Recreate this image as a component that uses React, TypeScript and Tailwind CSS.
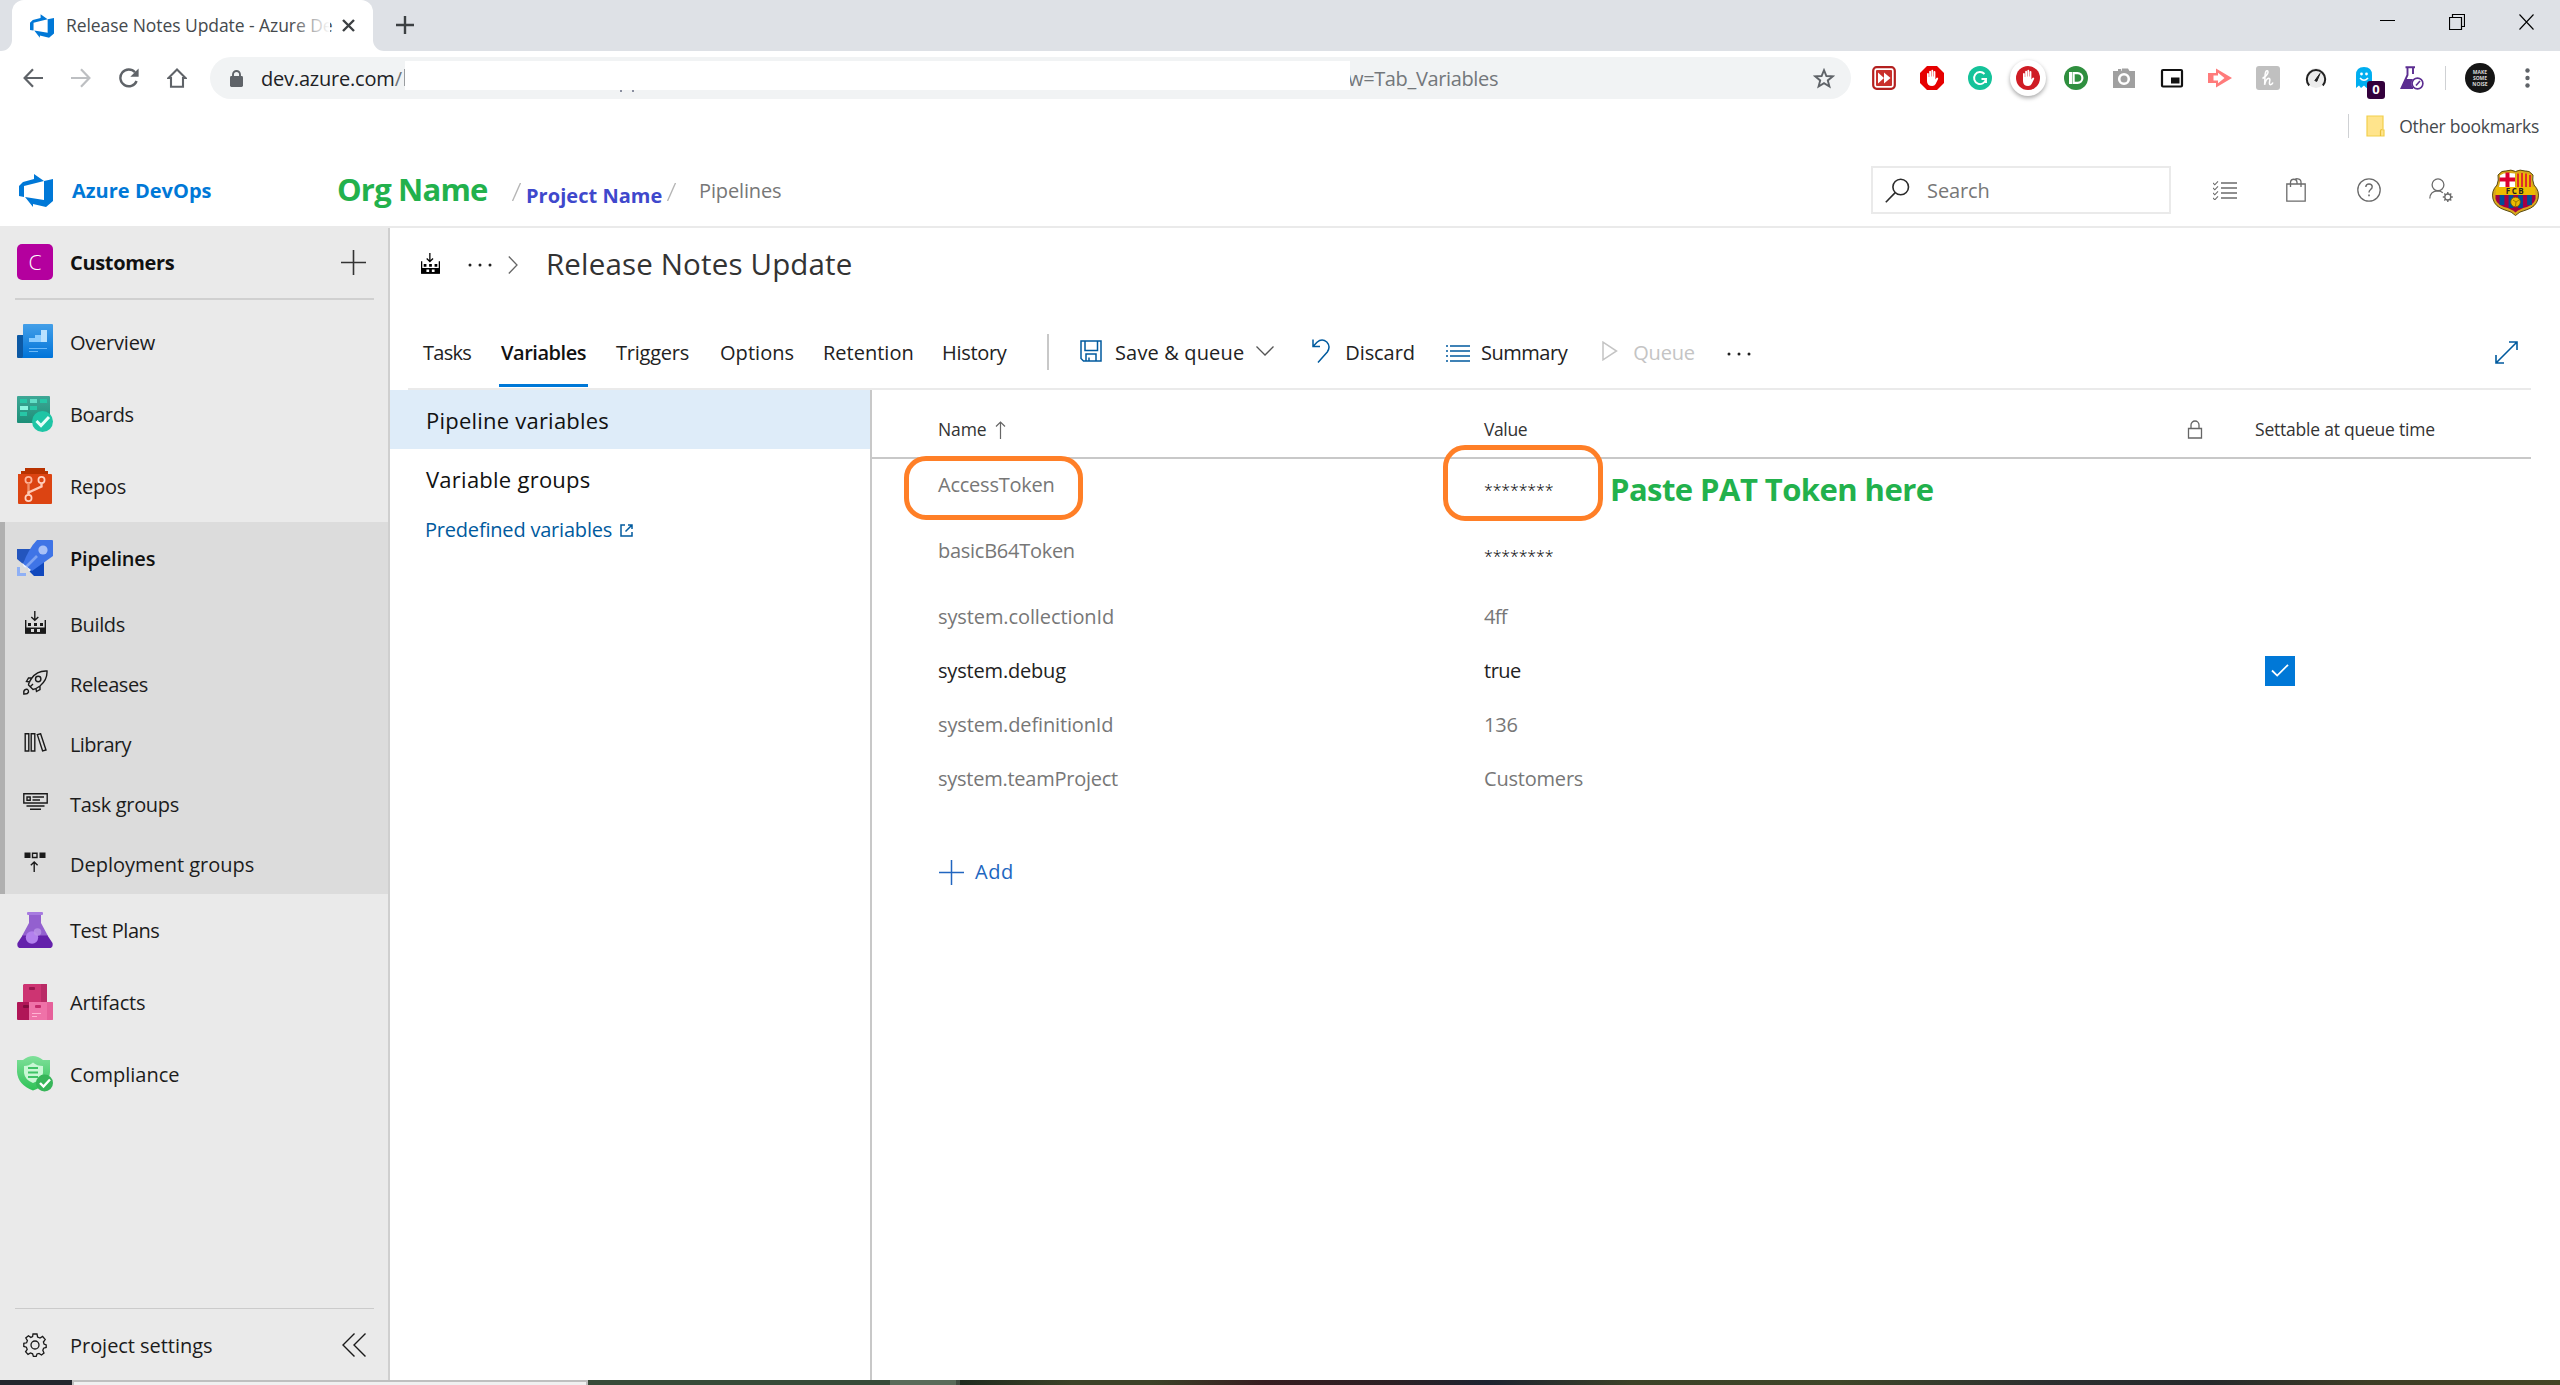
import React from "react";

type IconProps = { w: number; h: number; vb?: string; className?: string; children: React.ReactNode };

function Svg({ w, h, vb, className = "", children }: IconProps) {
  return (
    <svg width={w} height={h} viewBox={vb ?? `0 0 ${w} ${h}`} className={`shrink-0 ${className}`} fill="none">
      {children}
    </svg>
  );
}

function AzureLogo({ w, h }: { w: number; h: number }) {
  return (
    <Svg w={w} h={h} vb="0 0 34 33">
      <path
        fill="#0078d7"
        d="M0 12 L4 8 L15 5 V0 L25 7 L5 12 V23 L0 22 Z M25 7 L34 5 V27 L27 33 L14 30 V33 L6 23 L25 26 Z"
      />
    </Svg>
  );
}

/* ---------- Browser chrome ---------- */

function TabStrip() {
  return (
    <div className="flex h-[51px] bg-[#dee1e6]">
      <div className="flex w-3 items-end bg-white">
        <div className="h-full w-full rounded-br-[11px] bg-[#dee1e6]" />
      </div>
      <div className="h-full w-[361px] bg-[#dee1e6]">
        <div className="flex h-full items-center rounded-t-[12px] bg-white pl-[18px]">
          <AzureLogo w={24} h={24} />
          <div className="relative ml-[12px] w-[264px] whitespace-nowrap text-[17.5px] tracking-[-0.07px] text-[#45494d]">
            Release Notes Update - Azure De
            <div className="absolute inset-y-0 right-0 w-9 bg-gradient-to-r from-white/10 to-white" />
          </div>
          <Svg w={13} h={13} className="ml-[12px]">
            <path d="M1 1 L12 12 M12 1 L1 12" stroke="#3c4043" strokeWidth="2.4" />
          </Svg>
        </div>
      </div>
      <div className="flex w-3 items-end bg-white">
        <div className="h-full w-full rounded-bl-[11px] bg-[#dee1e6]" />
      </div>
      <Svg w={18} h={18} className="ml-[11px] mt-4">
        <path d="M9 0 V18 M0 9 H18" stroke="#3c4043" strokeWidth="2.4" />
      </Svg>
      <div className="ml-auto flex gap-[54px] pr-[26px] pt-[14px]">
        <Svg w={15} h={15}>
          <path d="M0 6.5 H15" stroke="#000" />
        </Svg>
        <Svg w={16} h={16}>
          <path d="M0.5 3.5 H12.5 V15.5 H0.5 Z M3.5 3 V0.5 H15.5 V12.5 H13" stroke="#000" strokeWidth="1.2" />
        </Svg>
        <Svg w={15} h={16}>
          <path d="M0.5 0.5 L14.5 15.5 M14.5 0.5 L0.5 15.5" stroke="#000" strokeWidth="1.1" />
        </Svg>
      </div>
    </div>
  );
}

const handPath =
  "M7 13.5 V8 a0.9 0.9 0 0 1 1.8 0 V11 H9.2 V5.6 a0.9 0.9 0 0 1 1.8 0 V10.5 H11.4 V4.7 a0.9 0.9 0 0 1 1.8 0 V10.5 H13.6 V6 a0.9 0.9 0 0 1 1.8 0 V13.5 L16.4 12 a1 1 0 0 1 1.7 1 L15.6 18 Q14.6 20 12.2 20 Q7 20 7 15 Z";

function Extensions() {
  return (
    <div className="ml-[21px] flex items-center gap-6">
      <Svg w={24} h={24}>
        <rect x="1.2" y="1.2" width="21.6" height="21.6" rx="3.5" fill="#fff" stroke="#b3201f" strokeWidth="2.2" />
        <rect x="4" y="4" width="16" height="16" rx="1" fill="#c9302c" />
        <path d="M6 6.5 L12 12 L6 17.5 Z M12 6.5 L18.5 12 L12 17.5 Z" fill="#fff" />
      </Svg>
      <Svg w={24} h={24}>
        <path d="M7 0 H17 L24 7 V17 L17 24 H7 L0 17 V7 Z" fill="#e60000" />
        <path d={handPath} fill="#fff" />
      </Svg>
      <Svg w={24} h={24}>
        <circle cx="12" cy="12" r="12" fill="#15c39a" />
        <path d="M16.5 8 A6 6 0 1 0 18 13 H13.5 M18 13 V17" stroke="#fff" strokeWidth="1.9" />
      </Svg>
      <div className="-mx-[6px] flex size-9 items-center justify-center rounded-full bg-white shadow-[0_2px_4px_rgba(0,0,0,0.35)]">
        <Svg w={24} h={24}>
          <circle cx="12" cy="12" r="12" fill="#cf1c24" />
          <path d={handPath} fill="#fff" />
        </Svg>
      </div>
      <Svg w={24} h={24}>
        <circle cx="12" cy="12" r="12" fill="#2f8f3f" />
        <path d="M5 6 H8 V18 H5 Z" fill="#fff" />
        <path d="M9.6 7.1 H13.5 a4.9 4.9 0 0 1 0 9.8 H9.6 Z" stroke="#fff" strokeWidth="2.2" />
      </Svg>
      <Svg w={24} h={24}>
        <path d="M1 5 H6 V3 H9 V5 H9.5 L10 2.5 H16 L17.5 5 H23 V22 H1 Z" fill="#a0a0a0" />
        <circle cx="12" cy="13" r="4.8" stroke="#fff" strokeWidth="2.6" />
      </Svg>
      <Svg w={24} h={24}>
        <rect x="2" y="4" width="20" height="16.5" rx="1" fill="#fff" stroke="#111" strokeWidth="2.2" />
        <rect x="11" y="11.5" width="8.5" height="6" fill="#111" />
      </Svg>
      <Svg w={24} h={24}>
        <path d="M8 2.5 L24 12 L8 21.5 V17 H0 V7 H8 Z" fill="#ff7b7b" />
        <path d="M5.5 9.5 H10 V6.8 L16.5 12 L10 17.2 V14.5 H5.5 Z" fill="#fff" />
      </Svg>
      <Svg w={24} h={24}>
        <rect width="24" height="24" rx="3" fill="#c0c0c0" />
        <path
          d="M6.5 12.5 Q11 10 12 6.5 Q12 4 10.3 5 Q9 6.5 9 11 L8.6 18.8 Q10 12.5 12.8 12.3 Q14.5 12.6 13.6 15.5 Q13 18.6 14.4 18.8 Q16 18.6 17 16.5"
          stroke="#fff"
          strokeWidth="1.5"
        />
      </Svg>
      <Svg w={24} h={24}>
        <circle cx="12" cy="12" r="10" fill="#ececec" />
        <path d="M5.2 19.5 A9.2 9.2 0 1 1 18.8 19.5" stroke="#222" strokeWidth="2" />
        <path d="M10.8 14.6 L16 7.5 L12.8 15.4 Z" fill="#222" stroke="#222" />
      </Svg>
      <div className="relative">
        <Svg w={24} h={24}>
          <path d="M4 22 V9 Q4 1 12 1 Q20 1 20 9 V22 L17 19.5 L14.5 22 L12 19.5 L9 22 L7 19.5 Z" fill="#00aef0" />
          <circle cx="9.5" cy="8" r="1.4" fill="#fff" />
          <circle cx="14.5" cy="8" r="1.4" fill="#fff" />
          <path d="M8 12 Q12 16.5 16 12" stroke="#fff" strokeWidth="1.6" />
        </Svg>
        <div className="absolute left-[15px] top-[15px] flex h-[18px] w-[18px] items-center justify-center rounded-[3px] bg-[#33003c] text-[13px] font-bold text-white">
          0
        </div>
      </div>
      <Svg w={24} h={24}>
        <path d="M5.5 1.2 H15 M7.5 1 V9 L1.5 22 H13 M13 1 V8" stroke="#5c2d91" strokeWidth="1.9" />
        <path d="M5.5 13 H13 Q10 17 13 22.8 H1 Z" fill="#5c2d91" />
        <circle cx="17.5" cy="17.5" r="5.4" fill="#fff" stroke="#5c2d91" strokeWidth="1.6" />
        <path d="M16 19.5 L20 15" stroke="#5c2d91" strokeWidth="1.6" />
      </Svg>
    </div>
  );
}

function Toolbar() {
  return (
    <div className="flex h-[54px] items-center bg-white">
      <Svg w={20} h={20} className="ml-[23px]">
        <path d="M20 10 H2 M10 1.2 L1.6 10 L10 18.8" stroke="#5f6368" strokeWidth="2.2" />
      </Svg>
      <Svg w={20} h={20} className="ml-7">
        <path d="M0 10 H18 M10 1.2 L18.4 10 L10 18.8" stroke="#bdbfc2" strokeWidth="2.2" />
      </Svg>
      <Svg w={20} h={20} className="ml-7">
        <path d="M17.6 13 A8.4 8.4 0 1 1 16 4.2" stroke="#5f6368" strokeWidth="2.4" />
        <path d="M19.6 0.5 V8.8 H11.3 Z" fill="#5f6368" />
      </Svg>
      <Svg w={20} h={20} className="ml-7">
        <path d="M1.5 10 L10 1.5 L18.5 10 H16 V18.8 H4 V10 Z" stroke="#5f6368" strokeWidth="2.1" />
      </Svg>
      <div className="ml-[23px] flex h-[42px] w-[1641px] items-center rounded-full bg-[#f1f3f4]">
        <Svg w={13} h={17} className="ml-5">
          <rect x="0" y="6" width="13" height="11" rx="1.4" fill="#5f6368" />
          <path d="M3 7 V4.5 a3.5 3.5 0 0 1 7 0 V7" stroke="#5f6368" strokeWidth="1.9" />
        </Svg>
        <div className="ml-[18px] w-[144px] whitespace-nowrap pt-px text-xl tracking-[-0.2px] text-[#202124]">
          dev.azure.com<span className="text-[#6f7478]">/</span>
        </div>
        <div className="relative mb-[6px] h-[29px] w-[945px] bg-white">
          <div className="absolute -left-px top-2 h-[17px] w-px bg-[#9a9da0]" />
          <div className="absolute left-[215px] top-[29px] h-[2px] w-[2px] bg-[#8a8fa0]" />
          <div className="absolute left-[227px] top-[29px] h-[2px] w-[2px] bg-[#8a8fa0]" />
        </div>
        <div className="w-[150px] whitespace-nowrap pt-px text-xl tracking-[-0.36px] text-[#73777b]">
          <span className="-ml-[2px]">w=Tab_Variables</span>
        </div>
        <Svg w={22} h={21} vb="0 0 22 21" className="ml-auto mr-4">
          <path
            d="M11 2.2 L13.4 8 L19.6 8.4 L14.8 12.4 L16.4 18.5 L11 15.1 L5.6 18.5 L7.2 12.4 L2.4 8.4 L8.6 8 Z"
            stroke="#5f6368"
            strokeWidth="1.9"
          />
        </Svg>
      </div>
      <Extensions />
      <div className="ml-[21px] h-6 w-px bg-[#cfd1d4]" />
      <div className="ml-[19px] flex size-[30px] flex-col items-center justify-center rounded-full bg-[#151515] text-[5px] font-bold leading-[6px] text-[#d8d8d8]">
        <span>MAKE</span>
        <span>SOME</span>
        <span>NOISE</span>
      </div>
      <Svg w={5} h={20} className="ml-[30px]">
        <circle cx="2.5" cy="2.5" r="2.2" fill="#5f6368" />
        <circle cx="2.5" cy="10" r="2.2" fill="#5f6368" />
        <circle cx="2.5" cy="17.5" r="2.2" fill="#5f6368" />
      </Svg>
    </div>
  );
}

function Bookmarks() {
  return (
    <div className="flex h-[42px] items-center justify-end bg-white pr-[21px]">
      <div className="h-6 w-px bg-[#cfd1d4]" />
      <Svg w={19} h={22} className="ml-[17px]">
        <path d="M1 1 H17 V15 H18 V21 H1 Z" fill="#ffe48c" stroke="#f2cf4c" strokeWidth="1.2" />
        <path d="M14.5 21 V16 Q14.5 14.5 16.2 14.5" stroke="#e8bf3a" strokeWidth="1.2" />
      </Svg>
      <span className="ml-[14px] text-[17.5px] tracking-[-0.26px] text-[#45494d]">Other bookmarks</span>
    </div>
  );
}

/* ---------- Azure DevOps header ---------- */

function Crest() {
  return (
    <Svg w={47} h={47}>
      <path d="M6 6 Q10 1 14 2 Q19 0 23.5 2.5 Q28 0 33 2 Q37 1 41 6 Q40 11 42 16 Q48 22 46 30 Q44 38 34 41 Q27 42.5 23.5 46.5 Q20 42.5 13 41 Q3 38 1 30 Q-1 22 5 16 Q7 11 6 6 Z" fill="#d9a81a" stroke="#5a4a10" strokeWidth="1" />
      <path d="M8 6.5 Q12 3 23 4.5 V18 H7 Q9 12 8 6.5 Z" fill="#fff" />
      <path d="M15.5 3.5 V18 M7.5 10.5 H23" stroke="#db0030" strokeWidth="4" />
      <path d="M24 4.5 Q35 3 39 6.5 Q38 12 40 18 H24 Z" fill="#edbb00" />
      <path d="M26 4.5 V18 M30 4 V18 M34 4.5 V18 M38 6 V18" stroke="#db2030" strokeWidth="1.8" />
      <rect x="4" y="18" width="39" height="8" fill="#edbb00" />
      <text x="23.5" y="25" textAnchor="middle" fontSize="8" fontWeight="700" fill="#222" letterSpacing="1.5">
        FCB
      </text>
      <path d="M3.5 26 H43.5 Q45 34 35 38 Q27 40 23.5 43.5 Q20 40 12 38 Q2 34 3.5 26 Z" fill="#a50044" />
      <path d="M10 26 V36 M19 26 V39 M28.5 26 V39 M37.5 26 V36" stroke="#004d98" strokeWidth="4.8" />
      <circle cx="23.5" cy="33" r="4.8" fill="#edbb00" stroke="#7a5c00" strokeWidth="0.8" />
      <path d="M21 31 L24 33 L27 31 M24 33 L23.5 37" stroke="#7a5c00" strokeWidth="0.7" />
    </Svg>
  );
}

function Header() {
  return (
    <header className="flex h-[81px] items-center whitespace-nowrap border-b-2 border-[#eaeaea] bg-white pt-[7px] text-xl">
      <div className="ml-[19px] flex w-[318px] items-center">
        <AzureLogo w={34} h={33} />
        <span className="ml-[19px] pt-[2px] font-bold tracking-[0.02px] text-[#0078d7]">Azure DevOps</span>
      </div>
      <span className="w-[175px] pb-[2px] text-[31px] font-bold leading-none tracking-[-0.81px] text-[#22b14c]">
        Org Name
      </span>
      <Svg w={9} h={18} className="mt-[3px]">
        <path d="M8.5 0 L0.5 18" stroke="#b5b5b5" strokeWidth="1.4" />
      </Svg>
      <span className="ml-[5px] w-[141px] pt-[12px] font-bold tracking-[0.04px] text-[#3f48cc]">Project Name</span>
      <Svg w={9} h={18} className="mt-[3px]">
        <path d="M8.5 0 L0.5 18" stroke="#b5b5b5" strokeWidth="1.4" />
      </Svg>
      <span className="ml-[23px] pt-[2px] tracking-[-0.14px] text-[#777]">Pipelines</span>
      <div className="ml-auto mr-[42px] flex h-12 w-[300px] items-center border-2 border-[#eaeaea] pl-3">
        <Svg w={25} h={25}>
          <circle cx="15.7" cy="9" r="7.8" stroke="#2b2b2b" strokeWidth="1.6" />
          <path d="M10.2 14.6 L0.8 24.2" stroke="#2b2b2b" strokeWidth="1.6" />
        </Svg>
        <span className="ml-[17px] pt-[2px] tracking-[-0.09px] text-[#777]">Search</span>
      </div>
      <Svg w={24} h={19}>
        <path d="M8 2 H24 M8 7 H24 M8 12 H24 M8 17 H24" stroke="#6b6b6b" strokeWidth="1.3" />
        <path d="M0 2 L1.8 3.8 L5 0.4 M0 7 L1.8 8.8 L5 5.4 M0 12 L1.8 13.8 L5 10.4 M0 17 L1.8 18.8 L5 15.4" stroke="#6b6b6b" strokeWidth="1.1" />
      </Svg>
      <Svg w={20} h={24} className="ml-[49px]">
        <path d="M0.8 6 H19.2 V23.2 H0.8 Z M4.5 9 V4 a3.3 3.3 0 0 1 6.5 0 V6 M8.5 2 Q10 0.6 11.5 0.8 a3.3 3.3 0 0 1 3.5 3.5 V9" stroke="#6b6b6b" strokeWidth="1.3" />
      </Svg>
      <Svg w={24} h={24} className="ml-[51px]">
        <circle cx="12" cy="12" r="11.2" stroke="#6b6b6b" strokeWidth="1.3" />
        <path d="M8.8 9 Q9 6 12 6 Q15.2 6 15.2 8.8 Q15.2 10.5 13.4 11.7 Q12 12.7 12 14.6" stroke="#6b6b6b" strokeWidth="1.4" />
        <path d="M12 16.5 V18.2" stroke="#6b6b6b" strokeWidth="1.6" />
      </Svg>
      <Svg w={25} h={25} className="ml-[48px]">
        <circle cx="9" cy="6.8" r="5.9" stroke="#6b6b6b" strokeWidth="1.3" />
        <path d="M0.8 20.5 Q1 13 9 12.8 Q12.2 13 13.8 14.8" stroke="#6b6b6b" strokeWidth="1.3" />
        <circle cx="18.8" cy="19" r="3" stroke="#6b6b6b" strokeWidth="1.3" />
        <path d="M18.8 14 V16 M18.8 22 V24 M13.8 19 H15.8 M21.8 19 H23.8 M15.3 15.5 L16.7 16.9 M20.9 21.1 L22.3 22.5 M22.3 15.5 L20.9 16.9 M16.7 21.1 L15.3 22.5" stroke="#6b6b6b" strokeWidth="1.4" />
      </Svg>
      <div className="ml-[38px] mr-[21px] mt-1">
        <Crest />
      </div>
    </header>
  );
}

/* ---------- Sidebar ---------- */

function OverviewIcon() {
  return (
    <Svg w={36} h={36}>
      <path d="M1 11 H8 V34 H1 Q0 34 0 33 V12 Q0 11 1 11 Z" fill="#0c59a4" />
      <defs>
        <linearGradient id="ov" x1="0" y1="0" x2="0" y2="1">
          <stop offset="0" stopColor="#449fe8" />
          <stop offset="1" stopColor="#0074d9" />
        </linearGradient>
      </defs>
      <path d="M7 0 H35 Q36 0 36 1 V33 Q36 34 35 34 H5 Q6 33 6 32 V1 Q6 0 7 0 Z" fill="url(#ov)" />
      <path d="M12 14 H18 V11 H24 V6 H30 V18 H12 Z" fill="#8accff" />
      <path d="M24 6 H30 V18 H24 Z" fill="#b9e2ff" />
      <path d="M12 24.5 H30 M12 27.5 H21" stroke="#6ab8f7" strokeWidth="1.2" />
    </Svg>
  );
}

function BoardsIcon() {
  return (
    <Svg w={36} h={36}>
      <defs>
        <linearGradient id="bd" x1="0" y1="0" x2="0" y2="1">
          <stop offset="0" stopColor="#3fa796" />
          <stop offset="1" stopColor="#1c8f78" />
        </linearGradient>
      </defs>
      <rect width="33" height="27" rx="1" fill="url(#bd)" />
      <path d="M3 3 H10 V7 H3 Z M23 3 H30 V7 H23 Z M3 16 H10 V20 H3 Z M13 10 H20 V14 H13 Z" fill="#27c6a6" />
      <path d="M13 3 H20 V7 H13 Z" fill="#62dfc7" />
      <path d="M3 10 H11 V14 H3 Z" fill="#8cf5df" />
      <circle cx="25.5" cy="25.5" r="10.5" fill="#1ec5a5" />
      <path d="M19.5 25 L24 29.5 L32 21" stroke="#e6fff9" strokeWidth="3" />
    </Svg>
  );
}

function ReposIcon() {
  return (
    <Svg w={36} h={36}>
      <path d="M8 0 H28 V3 H31 V7 H4 V3 H8 Z" fill="#b83200" />
      <path d="M1 6 H34 Q35 6 35 7 V35 Q35 36 34 36 H2 Q1 36 1 35 Z" fill="#dc4412" />
      <circle cx="11.5" cy="12" r="3.1" stroke="#ffb59b" strokeWidth="1.7" />
      <circle cx="24.5" cy="12" r="3.1" stroke="#ffd2c2" strokeWidth="1.7" />
      <circle cx="11.5" cy="30" r="3.1" stroke="#ffd2c2" strokeWidth="1.7" />
      <path d="M11.5 15 V27" stroke="#f08e68" strokeWidth="2.4" />
      <path d="M11.5 27 V24.5 L24.5 18.5 V15" stroke="#ffc9b5" strokeWidth="2.4" />
    </Svg>
  );
}

function PipelinesIcon() {
  return (
    <Svg w={36} h={36}>
      <path d="M0 9 H16 L6 24 L0 19 Z" fill="#2355bd" />
      <path d="M27 18 V36 H17 L12 31 Z" fill="#1148bd" />
      <path d="M20 0 H35 Q36 0 36 1 V16 L15 31 L6 24 Q12 8 20 0 Z" fill="#3f74e6" />
      <circle cx="26" cy="10" r="4.6" fill="#a8c1f7" />
      <path d="M9 27 L20 16" stroke="#7ea3f2" strokeWidth="2.6" />
      <path d="M5 23 L14 30 L12 32 L11 28 L7 27 Z" fill="#eef3ff" />
      <path d="M0 27 H3 V33 H9 V36 H0 Z" fill="#8fb0f5" />
    </Svg>
  );
}

function TestPlansIcon() {
  return (
    <Svg w={36} h={36}>
      <path d="M12 2 H24 V11 L31 24 H5 L12 11 Z" fill="#9360cf" />
      <rect x="10" y="0" width="16" height="3" rx="1" fill="#a77be0" />
      <path d="M5.5 23.5 H30.5 L35.5 31 Q36.5 36 32 36 H4 Q-0.5 36 0.5 31 Z" fill="#6421ab" />
      <circle cx="15" cy="25.5" r="6.2" fill="#b380ee" />
      <circle cx="20.5" cy="20" r="3.8" fill="#bb94e8" opacity="0.8" />
    </Svg>
  );
}

function ArtifactsIcon() {
  return (
    <Svg w={36} h={36}>
      <path d="M7 0 H30 V18 H6 V1 Z" fill="#cd3472" />
      <path d="M24 0 H29 Q30 0 30 1 V18 H24 Z" fill="#b92b66" />
      <rect x="12" y="3" width="6" height="3" rx="1" fill="#99164e" />
      <path d="M0 19 Q0 18 1 18 H12 V36 H1 Q0 36 0 35 Z" fill="#b01657" />
      <rect x="6" y="21" width="6" height="3" rx="1" fill="#820c3d" />
      <path d="M12 18 H35 Q36 18 36 19 V35 Q36 36 35 36 H12 Z" fill="#ef72a8" />
      <path d="M30 18 H35 Q36 18 36 19 V35 Q36 36 35 36 H30 Z" fill="#e6609a" />
      <rect x="18" y="21" width="6" height="3" rx="1" fill="#c42a6b" />
      <path d="M15 29.5 H24 M15 32.5 H20" stroke="#ffb3d2" strokeWidth="1.1" />
    </Svg>
  );
}

function ComplianceIcon() {
  return (
    <Svg w={36} h={36}>
      <defs>
        <linearGradient id="cp" x1="0" y1="0" x2="0" y2="1">
          <stop offset="0" stopColor="#7fe09a" />
          <stop offset="1" stopColor="#2fc257" />
        </linearGradient>
      </defs>
      <path d="M0 4 H6 Q11 0 16 0 Q21 0 26 4 H33 V16 Q32 29 16 34.5 Q1 29 0 16 Z" fill="url(#cp)" />
      <path d="M7 10 Q12 10 16 6.5 Q20 10 26 10 V17 Q25 24 16 27 Q8 24 7 17 Z" fill="#c9f7d5" />
      <path d="M11 12 H21 M11 16.5 H21 M11 21 H21" stroke="#3fc466" strokeWidth="2.2" />
      <circle cx="27.5" cy="27" r="8.5" fill="#37b559" />
      <path d="M23 27 L26.5 30.5 L33 23.5" stroke="#fff" strokeWidth="2.4" />
    </Svg>
  );
}

function BuildsIcon({ w, h, color }: { w: number; h: number; color: string }) {
  return (
    <Svg w={w} h={h} vb="0 0 21 23">
      <path d="M9.8 0 V9 M6.3 6 L9.8 9.3 L13.3 6" stroke={color} strokeWidth="1.4" />
      <path d="M0.7 9 V22 H20.3 V9" stroke={color} strokeWidth="1.4" />
      <path d="M3 12 H6 V15 H3 Z M9 12 H12 V15 H9 Z M15 12 H18 V15 H15 Z" fill={color} />
      <path fillRule="evenodd" d="M0.5 16.5 H20.5 V22.5 H0.5 Z M6 18 V21 H9 V18 Z M12 18 V21 H15 V18 Z" fill={color} />
    </Svg>
  );
}

function ReleasesIcon() {
  return (
    <Svg w={25} h={25}>
      <path
        d="M24 1 Q14 0.5 8.5 8.5 Q5.5 13 5.5 15 L10 19.5 Q13 19 17 16 Q24.5 10 24 1 Z M9 8 H5.5 L3.5 11.5 L7 12 M17 16 V19.5 L13.5 21.5 L13 18.5 M7 17 L10 14"
        stroke="#1a1a1a"
        strokeWidth="1.4"
      />
      <circle cx="15.2" cy="9" r="2.7" stroke="#1a1a1a" strokeWidth="1.4" />
      <path d="M0.8 24 V21.5 Q1.5 19 4 19.2 Q5.8 20 5.5 22 Q4.8 24.2 0.8 24 Z" stroke="#1a1a1a" strokeWidth="1.4" />
    </Svg>
  );
}

function LibraryIcon() {
  return (
    <Svg w={23} h={19}>
      <path d="M1.2 0.7 H4.8 V18 H1.2 Z M7.2 0.7 H10.8 V18 H7.2 Z M13.3 1.6 L16.6 0.7 L22 17 L18.6 18 Z" stroke="#1a1a1a" strokeWidth="1.4" />
    </Svg>
  );
}

function TaskGroupsIcon() {
  return (
    <Svg w={25} h={18}>
      <path d="M0.8 0.8 H24.2 V10 H0.8 Z M4 4 H7.2 V7.2 H4 Z" stroke="#1a1a1a" strokeWidth="1.4" />
      <path d="M9.5 4 H21 M9.5 7 H17 M3.5 13 H21.5 M7 16.3 H18" stroke="#1a1a1a" strokeWidth="1.4" />
    </Svg>
  );
}

function DeploymentIcon() {
  return (
    <Svg w={22} h={20}>
      <path d="M0.5 0.5 H6.5 V6 H0.5 Z M15.5 0.5 H21.5 V6 H15.5 Z" fill="#1a1a1a" />
      <path d="M8.5 1.2 H13 V5.5 H8.5 Z M10.2 20 V10 M6.8 13.2 L10.2 10 L13.6 13.2" stroke="#1a1a1a" strokeWidth="1.4" />
    </Svg>
  );
}

function NavItem({ icon, label, text = "" }: { icon: React.ReactNode; label: string; text?: string }) {
  return (
    <div className="flex h-[72px] items-center pl-[17px]">
      <span className="flex h-9 w-[53px] items-center">{icon}</span>
      <span className={`pt-[2px] ${text}`}>{label}</span>
    </div>
  );
}

function SubItem({ icon, label, text = "" }: { icon: React.ReactNode; label: string; text?: string }) {
  return (
    <div className="flex h-[60px] items-center">
      <span className="flex w-[70px] justify-center pb-1">{icon}</span>
      <span className={`pt-[2px] ${text}`}>{label}</span>
    </div>
  );
}

function Sidebar() {
  return (
    <nav className="flex h-full w-[390px] shrink-0 flex-col whitespace-nowrap border-r-2 border-[#cfcfcf] bg-[#eaeaea] text-xl text-[#1c1c1c]">
      <div className="flex h-[70px] items-center pb-[2px] pl-[17px] pr-[22px]">
        <span className="flex size-9 items-center justify-center rounded-[5px] bg-[#b4009e] text-[21px] font-light leading-none text-white">
          C
        </span>
        <span className="ml-[17px] pt-[2px] font-bold tracking-[-0.34px] text-[#111]">Customers</span>
        <Svg w={25} h={25} className="ml-auto">
          <path d="M12.5 0 V25 M0 12.5 H25" stroke="#333" strokeWidth="1.6" />
        </Svg>
      </div>
      <div className="mb-[6px] ml-[15px] mr-[14px] h-[2px] bg-[#d0d0d0]" />
      <NavItem icon={<OverviewIcon />} label="Overview" text="tracking-[-0.22px]" />
      <NavItem icon={<BoardsIcon />} label="Boards" text="tracking-[-0.4px]" />
      <NavItem icon={<ReposIcon />} label="Repos" text="tracking-[-0.25px]" />
      <div className="relative bg-[#dcdcdc]">
        <div className="absolute inset-y-0 left-0 w-[5px] bg-[#b0b0b0]" />
        <NavItem icon={<PipelinesIcon />} label="Pipelines" text="font-semibold tracking-[-0.19px] text-[#111]" />
        <SubItem icon={<BuildsIcon w={21} h={23} color="#1a1a1a" />} label="Builds" text="tracking-[-0.36px]" />
        <SubItem icon={<ReleasesIcon />} label="Releases" text="tracking-[-0.43px]" />
        <SubItem icon={<LibraryIcon />} label="Library" text="tracking-[-0.6px]" />
        <SubItem icon={<TaskGroupsIcon />} label="Task groups" text="tracking-[-0.32px]" />
        <SubItem icon={<DeploymentIcon />} label="Deployment groups" text="tracking-[-0.02px]" />
      </div>
      <NavItem icon={<TestPlansIcon />} label="Test Plans" text="tracking-[-0.47px]" />
      <NavItem icon={<ArtifactsIcon />} label="Artifacts" text="tracking-[-0.19px]" />
      <NavItem icon={<ComplianceIcon />} label="Compliance" text="tracking-[-0.02px]" />
      <div className="ml-[15px] mr-[14px] mt-auto h-px bg-[#cbcbcb]" />
      <div className="flex h-[71px] items-center pl-[23px] pr-[22px]">
        <Svg w={24} h={24} vb="0 0 24 24">
          <path
            d="M10 1 H14 L14.6 4 L17 5 L19.6 3.4 L22.2 6.6 L20.4 9 L21 11 L23.2 12 V14.5 L20.6 15.2 L19.8 17.3 L21 20 L18.5 22 L16 20.4 L14 21 L13.2 23.4 H10.4 L9.6 20.8 L7.5 20 L5 21.4 L2.6 18.8 L4.2 16.4 L3.4 14.2 L0.8 13.4 V10.4 L3.6 9.8 L4.4 7.6 L2.8 5 L5.4 2.8 L7.8 4.4 L9.6 3.6 Z"
            stroke="#1a1a1a"
            strokeWidth="1.3"
          />
          <circle cx="12" cy="12" r="4" stroke="#1a1a1a" strokeWidth="1.3" />
        </Svg>
        <span className="ml-[23px] pt-[2px] tracking-[-0.04px]">Project settings</span>
        <Svg w={24} h={24} className="ml-auto">
          <path d="M12.5 0.5 L1 12 L12.5 23.5 M23.5 0.5 L12 12 L23.5 23.5" stroke="#1a1a1a" strokeWidth="1.4" />
        </Svg>
      </div>
    </nav>
  );
}

/* ---------- Main area ---------- */

function Dots() {
  return (
    <Svg w={24} h={4}>
      <circle cx="2" cy="2" r="1.5" fill="#222" />
      <circle cx="12" cy="2" r="1.5" fill="#222" />
      <circle cx="22" cy="2" r="1.5" fill="#222" />
    </Svg>
  );
}

function Breadcrumb() {
  return (
    <div className="flex h-[72px] items-center pb-px pl-[31px]">
      <BuildsIcon w={19} h={21} color="#000" />
      <div className="ml-7 pt-[2px]">
        <Dots />
      </div>
      <Svg w={10} h={18} className="ml-4 mt-[3px]">
        <path d="M0.8 0.5 L9 9 L0.8 17.5" stroke="#666" strokeWidth="1.3" />
      </Svg>
      <h1 className="ml-[28px] whitespace-nowrap text-[29.5px] leading-none tracking-[0.16px] text-[#333]">
        Release Notes Update
      </h1>
    </div>
  );
}

function CommandBar() {
  return (
    <div className="ml-[18px] mr-[29px] flex h-[90px] items-stretch whitespace-nowrap border-b-2 border-[#eaeaea] text-xl text-[#222]">
      <div className="flex w-[91px] items-center pl-[15px] pt-[18px] tracking-[-0.75px]">Tasks</div>
      <div className="mb-px flex w-[89px] flex-col border-b-[3px] border-[#0078d7]">
        <span className="pl-[2px] pt-[39px] font-semibold tracking-[-0.45px] text-[#111]">Variables</span>
      </div>
      <div className="flex w-[132px] items-center pl-[28px] pt-[18px] tracking-[-0.22px]">Triggers</div>
      <div className="flex w-[103px] items-center pt-[18px] tracking-[0.05px]">Options</div>
      <div className="flex w-[119px] items-center pt-[18px]">Retention</div>
      <div className="flex w-[105px] items-center pt-[18px] tracking-[-0.3px]">History</div>
      <div className="mt-[34px] h-9 w-[2px] bg-[#c8c8c8]" />
      <div className="flex items-center pt-[18px]">
        <Svg w={22} h={22} className="mb-1 ml-[31px]">
          <path d="M1 1 H21 V21 H3.5 L1 18.5 Z M5 1 V10.5 H17.5 V1 M6 21 V14 H16 V21 M9 21 V17.5" stroke="#005a9e" strokeWidth="1.5" />
        </Svg>
        <span className="ml-[13px] tracking-[0.15px]">Save &amp; queue</span>
        <Svg w={18} h={10} className="mb-[5px] ml-[12px]">
          <path d="M0.5 0.5 L9 9 L17.5 0.5" stroke="#555" strokeWidth="1.3" />
        </Svg>
        <Svg w={18} h={24} className="mb-[5px] ml-[38px]">
          <path d="M1 0.5 V7.5 H8 M1 7.5 L5 3.2 Q10 -1 14.8 3 Q19 7.5 15.3 13 L6 23.5" stroke="#005a9e" strokeWidth="1.5" />
        </Svg>
        <span className="ml-[15px] tracking-[-0.09px]">Discard</span>
        <Svg w={24} h={17} className="ml-[31px]">
          <path d="M4 1 H24 M4 6 H24 M4 11 H24 M4 16 H24" stroke="#005a9e" strokeWidth="1.6" />
          <path d="M0 1 H2 M0 6 H2 M0 11 H2 M0 16 H2" stroke="#005a9e" strokeWidth="1.6" />
        </Svg>
        <span className="ml-[11px] tracking-[-0.46px]">Summary</span>
        <Svg w={16} h={20} className="mb-1 ml-[35px]">
          <path d="M1 1.2 L14.5 10 L1 18.8 Z" stroke="#c4c4c4" strokeWidth="1.5" />
        </Svg>
        <span className="ml-[15px] mr-[32px] tracking-[-0.18px] text-[#c4c4c4]">Queue</span>
        <div className="pt-[2px]">
          <Dots />
        </div>
      </div>
      <Svg w={23} h={23} className="ml-auto mr-[13px] mt-[41px]">
        <path d="M1.5 21.5 L21.5 1.5 M14 1 H22 V9 M1 14 V22 H9" stroke="#005a9e" strokeWidth="1.6" />
      </Svg>
    </div>
  );
}

function VariablePanel() {
  return (
    <div className="w-[482px] shrink-0 whitespace-nowrap border-r-2 border-[#c8c8c8] text-[22px] text-[#111]">
      <div className="flex h-[59px] items-center bg-[#deecf9] pl-[36px] pt-px tracking-[0.22px]">Pipeline variables</div>
      <div className="flex h-[59px] items-center pl-[36px] pt-px tracking-[0.25px]">Variable groups</div>
      <div className="flex h-[44px] items-center pl-[35px] text-xl tracking-[-0.2px] text-[#005a9e]">
        Predefined variables
        <Svg w={13} h={13} className="ml-[8px]">
          <path d="M5 1 H1 V12 H12 V8 M8 1 H12 V5 M12 1 L5.5 7.5" stroke="#005a9e" strokeWidth="1.5" />
        </Svg>
      </div>
    </div>
  );
}

type Row = { name: string; value: string; row: string; nameCls: string; valueCls: string; checked?: boolean };

const rows: Row[] = [
  { name: "AccessToken", value: "********", row: "h-[52px] text-[#777]", nameCls: "tracking-[-0.23px]", valueCls: "pt-[11px] text-[16px] font-light tracking-[-0.15px] text-[#000]" },
  { name: "basicB64Token", value: "********", row: "h-[80px] text-[#777]", nameCls: "tracking-[-0.27px]", valueCls: "pt-[11px] text-[16px] font-light tracking-[-0.15px] text-[#000]" },
  { name: "system.collectionId", value: "4ff", row: "h-[52px] text-[#777]", nameCls: "tracking-[-0.1px]", valueCls: "tracking-[-0.7px]" },
  { name: "system.debug", value: "true", row: "h-[55px] text-[#222]", nameCls: "tracking-[-0.18px]", valueCls: "tracking-[-0.5px]", checked: true },
  { name: "system.definitionId", value: "136", row: "h-[54px] text-[#777]", nameCls: "tracking-[-0.14px]", valueCls: "tracking-[-0.14px]" },
  { name: "system.teamProject", value: "Customers", row: "h-[54px] text-[#777]", nameCls: "tracking-[-0.25px]", valueCls: "tracking-[-0.2px]" },
];

function VariableTable() {
  return (
    <div className="relative mr-[29px] grow whitespace-nowrap text-xl">
      <div className="flex h-[69px] items-center border-b-2 border-[#c8c8c8] pt-3 text-[17.5px] text-[#333]">
        <div className="flex w-[612px] items-center pl-[66px] tracking-[-0.1px]">
          Name
          <Svg w={11} h={18} className="ml-[8px]">
            <path d="M5.5 18 V1 M1 5.5 L5.5 1 L10 5.5" stroke="#666" strokeWidth="1.2" />
          </Svg>
        </div>
        <div className="w-[703px] tracking-[-0.4px]">Value</div>
        <Svg w={16} h={19}>
          <path d="M1.5 8.5 H14.5 V18 H1.5 Z M4 8.5 V5 a4 4 0 0 1 8 0 V8.5" stroke="#666" strokeWidth="1.3" />
        </Svg>
        <div className="ml-[52px] tracking-[-0.22px]">Settable at queue time</div>
      </div>
      {rows.map((r) => (
        <div key={r.name} className={`flex items-center ${r.row}`}>
          <div className={`w-[612px] pl-[66px] ${r.nameCls}`}>{r.name}</div>
          <div className={`w-[781px] ${r.valueCls}`}>{r.value}</div>
          {r.checked && (
            <div className="flex size-[30px] items-center justify-center bg-[#0078d7]">
              <Svg w={18} h={13}>
                <path d="M1 6.5 L6.2 11.6 L17 0.8" stroke="#fff" strokeWidth="1.8" />
              </Svg>
            </div>
          )}
        </div>
      ))}
      <div className="mt-[40px] flex h-[52px] items-center pl-[67px] text-[#2166c0]">
        <Svg w={25} h={25}>
          <path d="M12.5 0 V25 M0 12.5 H25" stroke="#2166c0" strokeWidth="1.5" />
        </Svg>
        <span className="ml-[11px] tracking-[0.6px]">Add</span>
      </div>

      {/* Callouts drawn over the first row */}
      <div className="absolute left-[32px] top-[66px] h-[64px] w-[179px] rounded-[22px] border-[5px] border-[#ff7f27]" />
      <div className="absolute left-[571px] top-[55px] h-[76px] w-[160px] rounded-[22px] border-[5px] border-[#ff7f27]" />
      <div className="absolute left-[738px] top-[84px] text-[31px] font-bold leading-[31px] tracking-[-0.55px] text-[#22b14c]">
        Paste PAT Token here
      </div>
    </div>
  );
}

function TaskbarEdge() {
  return (
    <div className="flex h-[5px]">
      <div className="w-[72px] bg-[#23252c]" />
      <div className="w-[516px] border-x-2 border-t-2 border-[#bfbfbf] bg-[#f0f0f0]" />
      <div className="w-[302px] bg-[#374a38]" />
      <div className="w-[66px] bg-[#5a6b5a]" />
      <div className="w-[4px] bg-[#414c41]" />
      <div className="grow bg-[linear-gradient(90deg,#1f2a1e_0%,#3c4228_7%,#3c4228_12%,#371c20_19%,#2d2024_27%,#1d2330_33%,#3c4228_42%,#3f4629_55%,#2c2f30_68%,#262a2c_78%,#3e3d26_88%,#444626_100%)]" />
    </div>
  );
}

export default function App() {
  return (
    <div className="flex h-[1385px] w-[2560px] flex-col overflow-hidden bg-white font-['Open_Sans','Noto_Sans',sans-serif]">
      <TabStrip />
      <Toolbar />
      <Bookmarks />
      <Header />
      <div className="flex h-[1152px]">
        <Sidebar />
        <main className="flex grow flex-col">
          <Breadcrumb />
          <CommandBar />
          <div className="flex grow">
            <VariablePanel />
            <VariableTable />
          </div>
        </main>
      </div>
      <TaskbarEdge />
    </div>
  );
}
